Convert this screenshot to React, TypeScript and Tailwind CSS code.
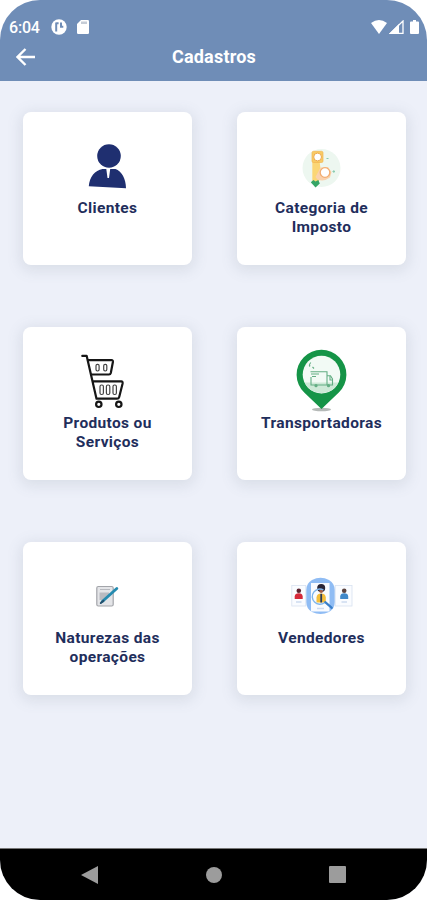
import type { ReactNode } from "react";

type CardItem = {
  id: string;
  lines: string[];
  icon: ReactNode;
};

function ClientIcon() {
  return (
    <svg viewBox="0 0 64 64" className="h-16 w-16" fill="#1f2f70">
      <circle cx="33" cy="22" r="11.8" />
      <path d="M12.8 52.3C13.5 43 19 36.2 26.5 35H30.3L31.5 44H33L34.2 35H39.5C45.5 37 50 44.5 50 54.3Z" />
    </svg>
  );
}

function TaxIcon() {
  return (
    <svg viewBox="0 0 64 64" className="h-16 w-16" fill="none">
      <circle cx="31.5" cy="34" r="19" fill="#edf7f0" />
      <path d="M22.3 27H29.5L31.3 40L28.5 48H22.3Z" fill="#fbd675" />
      <rect x="22" y="17.3" width="11" height="11.2" rx="1.5" fill="#f8cb63" stroke="#f3b451" strokeWidth="0.7" />
      <circle cx="27.6" cy="23" r="3.9" fill="#fff" stroke="#eda94c" strokeWidth="1" />
      <path d="M25.5 43L30.5 33.5L38 33L41.5 38L40 43.5Q34 48 27.5 45.5Z" fill="#fad1ac" />
      <circle cx="35" cy="38.5" r="4.8" fill="#fff" stroke="#f2ae72" strokeWidth="1.3" />
      <path d="M20.8 48.3L23.5 46L25.5 47.5L28.3 46L29.8 49.5L25.5 53.5Z" fill="#35a566" />
      <path d="M36.5 24.5H38.5M42.5 37.5H45M43.8 36.3V38.7" stroke="#8bcbb0" strokeWidth="1.2" />
    </svg>
  );
}

function CartIcon() {
  return (
    <svg
      viewBox="0 0 64 64"
      className="h-16 w-16"
      fill="none"
      stroke="#161616"
      strokeWidth="2.2"
      strokeLinecap="round"
      strokeLinejoin="round"
    >
      <path d="M6.3 6.9H10.7L20.5 49.7H41Q42.8 49.7 43.2 48L46.6 34.4Q46.8 32.4 45.3 32.4H17" />
      <path d="M12 11.2H35.5Q37.2 11.2 36.9 13L34.8 24Q34.4 25.5 33 25.5H15.5" />
      <circle cx="22.8" cy="55.3" r="2.7" />
      <circle cx="42.8" cy="55.3" r="2.7" />
      <g strokeWidth="1.2" stroke="#444">
        <rect x="20" y="15.3" width="3.1" height="6.7" rx="1.4" />
        <rect x="27.7" y="15.3" width="3.1" height="6.7" rx="1.4" />
        <rect x="24" y="36" width="3.4" height="9.5" rx="1.5" />
        <rect x="30.4" y="36" width="3.4" height="9.5" rx="1.5" />
        <rect x="37" y="36" width="3.4" height="9.5" rx="1.5" />
      </g>
    </svg>
  );
}

function TruckPinIcon() {
  return (
    <svg viewBox="0 0 64 64" className="h-16 w-16" fill="none">
      <ellipse cx="31.5" cy="60.5" rx="9.5" ry="1.8" fill="#b5b9b7" />
      <path d="M31.5 60L14.2 43.6A24.9 24.9 0 1 1 48.8 43.6Z" fill="#159447" />
      <circle cx="31.5" cy="25.6" r="18.8" fill="#f2faf5" />
      <path d="M14.5 33.5H48.5A18.8 18.8 0 0 1 14.5 33.5Z" fill="#cde9d7" />
      <g stroke="#63ad83" strokeWidth="1.1">
        <path d="M20.5 22.8H37V36H21V28M37 26.8H40.5L42.5 30V36H37M21 25H29M22 27.5H26" />
        <path d="M40 27V31H42.5M20.8 13.5Q18.5 16 20 17.5M22.5 18L24 19.5" />
      </g>
      <circle cx="26" cy="36.7" r="1.6" fill="#63ad83" />
      <circle cx="38.5" cy="36.7" r="1.6" fill="#63ad83" />
    </svg>
  );
}

function NoteIcon() {
  return (
    <svg viewBox="0 0 64 64" className="h-16 w-16" fill="none">
      <rect x="20.8" y="22.5" width="16.4" height="19.5" rx="1.5" fill="#e4e5e8" stroke="#a3a5aa" strokeWidth="1.2" />
      <path d="M24 25.5H34" stroke="#b7b9bf" strokeWidth="1" />
      <path d="M23.5 28.5H33V31L27 36H23.5Z" fill="#b9bbc1" />
      <path d="M26.3 37.5L40.8 24.5" stroke="#258bb0" strokeWidth="2.9" strokeLinecap="round" />
      <path d="M24.8 39L27.5 36.8" stroke="#24506d" strokeWidth="2" strokeLinecap="round" />
    </svg>
  );
}

function SellersIcon() {
  return (
    <svg viewBox="0 0 64 64" className="h-16 w-16" fill="none">
      <path d="M22 16Q30.5 11.5 39 16Q44.8 19.5 44.8 26V38Q44.8 44.5 39 48Q30.5 52 22 48Q16.2 44.5 16.2 38V26Q16.2 19.5 22 16Z" fill="#8fbcf4" />
      <rect x="1.8" y="21.5" width="14" height="20.5" fill="#fafcff" stroke="#d8e2f1" strokeWidth="0.8" />
      <rect x="45.2" y="21.5" width="16.8" height="20.5" fill="#fafcff" stroke="#d8e2f1" strokeWidth="0.8" />
      <rect x="21" y="19" width="18.5" height="28.5" fill="#f9fbff" />
      <circle cx="8.8" cy="26.7" r="2.3" fill="#5b2430" />
      <path d="M4.7 35V32.5Q5 29.2 8.8 29.2Q12.4 29.2 12.7 32.5V35Z" fill="#d4293a" />
      <circle cx="54.2" cy="26.7" r="2.3" fill="#5c4440" />
      <path d="M50.2 35V32.5Q50.5 29.2 54.2 29.2Q58 29.2 58.2 32.5V35Z" fill="#4189c9" />
      <path d="M6 38H11.5M51.5 38H57M27 44.5H34" stroke="#cddaf0" strokeWidth="1.4" />
      <circle cx="31.2" cy="24" r="4" fill="#292536" />
      <circle cx="31.2" cy="27" r="1.9" fill="#a65e43" />
      <path d="M26.5 38.5V33.5Q26.8 29.5 31.2 29.5Q35.5 29.5 35.8 33.5V38.5Z" fill="#f4bd39" />
      <path d="M31.2 29.8V38.5" stroke="#28395a" strokeWidth="1.8" />
      <path d="M34.5 38.7A7.6 7.6 0 1 1 33.5 26" stroke="#7eb5ec" strokeWidth="1.4" />
      <path d="M35.2 38.2L41.8 43.8" stroke="#397fcb" strokeWidth="2.2" strokeLinecap="round" />
    </svg>
  );
}

const items: CardItem[] = [
  { id: "clientes", lines: ["Clientes"], icon: <ClientIcon /> },
  { id: "impostos", lines: ["Categoria de", "Imposto"], icon: <TaxIcon /> },
  { id: "produtos", lines: ["Produtos ou", "Serviços"], icon: <CartIcon /> },
  { id: "transportadoras", lines: ["Transportadoras"], icon: <TruckPinIcon /> },
  { id: "naturezas", lines: ["Naturezas das", "operações"], icon: <NoteIcon /> },
  { id: "vendedores", lines: ["Vendedores"], icon: <SellersIcon /> },
];

function StatusBar() {
  return (
    <div className="flex h-[38px] items-end justify-between pr-2 pl-[9px] text-white">
      <div className="flex h-[22px] items-center">
        <span className="w-[42px] pt-px text-[16px] leading-none font-medium tracking-[-0.2px]">6:04</span>
        <svg viewBox="0 0 16 16" className="h-4 w-4">
          <circle cx="8" cy="8" r="7.7" fill="#fff" />
          <path d="M5.2 3.5V12.5M5.2 4.3H7.6M10 3.5V7.8H12.3" fill="none" stroke="#6f8db7" strokeWidth="2" />
        </svg>
        <svg viewBox="0 0 12 14" className="ml-[10px] h-[14px] w-3">
          <path d="M4 0H10.7Q12 0 12 1.3V12.7Q12 14 10.7 14H1.3Q0 14 0 12.7V4Z" fill="#fff" />
          <path d="M5 1.5V4M7 1.5V4M9 1.5V4" stroke="#8b99ad" strokeWidth="1" />
        </svg>
      </div>
      <div className="flex h-[22px] items-center">
        <svg viewBox="0 0 16 14" className="h-[14px] w-4">
          <path d="M0 3Q8 -3 16 3L8 14Z" fill="#fff" />
        </svg>
        <svg viewBox="0 0 15 14" className="ml-[2px] h-[14px] w-[15px]">
          <path d="M14 1V13.3H1.3Z" fill="none" stroke="#fff" strokeWidth="1.3" />
          <path d="M0 14L10 4V14Z" fill="#fff" />
        </svg>
        <svg viewBox="0 0 9 14" className="ml-[6px] h-[14px] w-[9px]">
          <path d="M3 0H6V1.5H8Q9 1.5 9 2.5V13Q9 14 8 14H1Q0 14 0 13V2.5Q0 1.5 1 1.5H3Z" fill="#fff" />
        </svg>
      </div>
    </div>
  );
}

function Card({ item }: { item: CardItem }) {
  return (
    <button className="flex h-[153px] flex-col items-center rounded-[8px] bg-white pt-[22px] shadow-[0_3px_14px_3px_rgba(90,105,125,0.13)]">
      {item.icon}
      <span className="flex flex-col pt-px text-center text-[15.5px] leading-[19px] font-bold tracking-[0.35px] whitespace-nowrap text-[#1f2e5c]">
        {item.lines.map((line) => (
          <span key={line}>{line}</span>
        ))}
      </span>
    </button>
  );
}

export default function App() {
  return (
    <div className="h-[900px] w-[427px] bg-white font-['Roboto',sans-serif]">
      <div className="flex h-full flex-col overflow-hidden rounded-[40px] bg-[#edf0f9]">
        <header className="h-[81px] shrink-0 bg-[#6f8db7]">
          <StatusBar />
          <div className="grid h-[38px] grid-cols-[1fr_auto_1fr] items-center pr-[15px] pl-4">
            <svg viewBox="0 0 20 18" className="h-[18px] w-5" fill="none" stroke="#fff" strokeWidth="2.4">
              <path d="M9.5 1L1.5 9L9.5 17M1.5 9H19" />
            </svg>
            <h1 className="text-[18px] leading-none font-bold tracking-[0.2px] text-white">Cadastros</h1>
          </div>
        </header>

        <main className="grid flex-1 grid-cols-[169px_169px] content-start gap-x-[45px] gap-y-[62px] pt-[31px] pl-[23px]">
          {items.map((item) => (
            <Card key={item.id} item={item} />
          ))}
        </main>

        <nav className="flex h-[52px] shrink-0 items-center justify-between border-t border-[#777] bg-black pr-[81px] pl-[81px]">
          <svg viewBox="0 0 17 18" className="h-[18px] w-[17px]">
            <path d="M0 9L17 0V18Z" fill="#9c9c9c" />
          </svg>
          <div className="h-4 w-4 rounded-full bg-[#9c9c9c]" />
          <div className="h-[17px] w-[17px] rounded-[1px] bg-[#9c9c9c]" />
        </nav>
      </div>
    </div>
  );
}
